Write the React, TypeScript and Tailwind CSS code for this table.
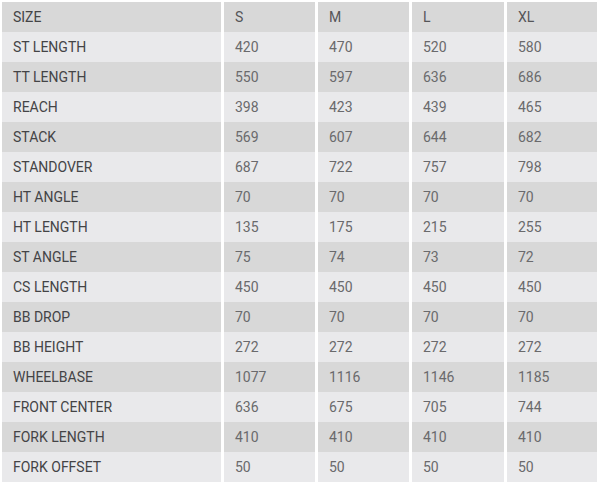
import React from 'react';

// Geometry table rows: label + S, M, L, XL
const rows: [string, string, string, string, string][] = [
  ['SIZE', 'S', 'M', 'L', 'XL'],
  ['ST LENGTH', '420', '470', '520', '580'],
  ['TT LENGTH', '550', '597', '636', '686'],
  ['REACH', '398', '423', '439', '465'],
  ['STACK', '569', '607', '644', '682'],
  ['STANDOVER', '687', '722', '757', '798'],
  ['HT ANGLE', '70', '70', '70', '70'],
  ['HT LENGTH', '135', '175', '215', '255'],
  ['ST ANGLE', '75', '74', '73', '72'],
  ['CS LENGTH', '450', '450', '450', '450'],
  ['BB DROP', '70', '70', '70', '70'],
  ['BB HEIGHT', '272', '272', '272', '272'],
  ['WHEELBASE', '1077', '1116', '1146', '1185'],
  ['FRONT CENTER', '636', '675', '705', '744'],
  ['FORK LENGTH', '410', '410', '410', '410'],
  ['FORK OFFSET', '50', '50', '50', '50'],
];

export default function App() {
  return (
    <div className="w-[599px] h-[484px] bg-white p-[2px]" style={{ fontFamily: 'Roboto, "Liberation Sans", sans-serif' }}>
      <div className="grid grid-cols-[219px_91px_91px_92px_90px] gap-x-[3px] text-[14px]">
        {rows.map((r, i) => {
          const bg = i % 2 === 0 ? 'bg-[#d8d8d8]' : 'bg-[#e9e9eb]';
          return (
            <React.Fragment key={r[0]}>
              <div className={`${bg} h-[30px] flex items-center pl-[11px] text-[#444446]`}>{r[0]}</div>
              {r.slice(1).map((v, j) => (
                <div key={j} className={`${bg} h-[30px] flex items-center pl-[11px] ${i === 0 ? 'text-[#555558]' : 'text-[#6a6a6c]'}`}>
                  {v}
                </div>
              ))}
            </React.Fragment>
          );
        })}
      </div>
    </div>
  );
}
